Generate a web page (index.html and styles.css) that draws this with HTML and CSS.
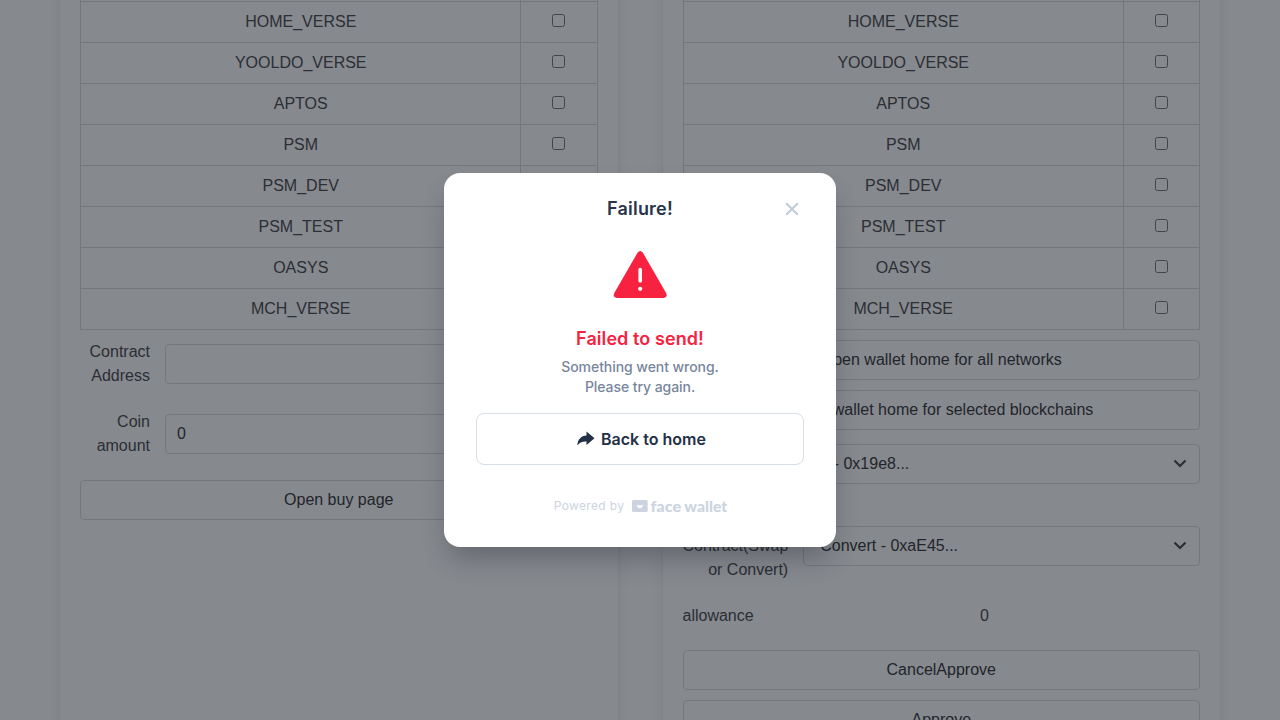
FILE: index.html
```html
<!DOCTYPE html>
<html lang="en">
<head>
<meta charset="utf-8">
<title>Face Wallet</title>
<link rel="stylesheet" href="styles.css">
</head>
<body>
<main class="page">
  <section class="box">
    <table class="networks">
      <tr><td></td><td class="check"></td></tr>
      <tr><td>HOME_VERSE</td><td class="check"><input type="checkbox"></td></tr>
      <tr><td>YOOLDO_VERSE</td><td class="check"><input type="checkbox"></td></tr>
      <tr><td>APTOS</td><td class="check"><input type="checkbox"></td></tr>
      <tr><td>PSM</td><td class="check"><input type="checkbox"></td></tr>
      <tr><td>PSM_DEV</td><td class="check"><input type="checkbox"></td></tr>
      <tr><td>PSM_TEST</td><td class="check"><input type="checkbox"></td></tr>
      <tr><td>OASYS</td><td class="check"><input type="checkbox"></td></tr>
      <tr><td>MCH_VERSE</td><td class="check"><input type="checkbox"></td></tr>
    </table>
    <div class="field"><label class="label">Contract Address</label><div class="control"></div></div>
    <div class="field"><label class="label">Coin amount</label><div class="control">0</div></div>
    <div class="button">Open buy page</div>
  </section>
  <section class="box">
    <table class="networks">
      <tr><td></td><td class="check"></td></tr>
      <tr><td>HOME_VERSE</td><td class="check"><input type="checkbox"></td></tr>
      <tr><td>YOOLDO_VERSE</td><td class="check"><input type="checkbox"></td></tr>
      <tr><td>APTOS</td><td class="check"><input type="checkbox"></td></tr>
      <tr><td>PSM</td><td class="check"><input type="checkbox"></td></tr>
      <tr><td>PSM_DEV</td><td class="check"><input type="checkbox"></td></tr>
      <tr><td>PSM_TEST</td><td class="check"><input type="checkbox"></td></tr>
      <tr><td>OASYS</td><td class="check"><input type="checkbox"></td></tr>
      <tr><td>MCH_VERSE</td><td class="check"><input type="checkbox"></td></tr>
    </table>
    <div class="button">Open wallet home for all networks</div>
    <div class="button">Open wallet home for selected blockchains</div>
    <div class="select-row">
      <span class="select-label"></span>
      <div class="control select first"><span>- 0x19e8...</span><svg class="chevron" viewBox="0 0 14 9"><path d="M1.500 1.500 7 7l5.500-5.500"/></svg></div>
    </div>
    <div class="select-row tall">
      <span class="select-label">Contract(Swap or Convert)</span>
      <div class="control select"><span>Convert - 0xaE45...</span><svg class="chevron" viewBox="0 0 14 9"><path d="M1.500 1.500 7 7l5.500-5.500"/></svg></div>
    </div>
    <div class="allowance"><span>allowance</span><span class="amount">0</span></div>
    <div class="button">CancelApprove</div>
    <div class="button">Approve</div>
  </section>
</main>
<div class="overlay">
  <div class="modal">
    <header class="modal-head">
      <h1 class="title">Failure!</h1>
      <svg class="close" viewBox="0 0 14 14"><path d="M1.200 1.200l11.600 11.600m0-11.600l-11.600 11.600"/></svg>
    </header>
    <svg class="warning" viewBox="0 0 54 48">
      <path class="sign" d="M24.700 2.400Q27.200-.600 29.700 2.400L53.100 43Q55 47.600 50.500 48h-46.600Q-.600 47.600 1.300 43z"/>
      <path class="mark" d="M27.200 19.500v11.500"/><circle class="dot" cx="27.200" cy="38.800" r="2.100"/>
    </svg>
    <h2 class="failed">Failed to send!</h2>
    <p class="message">Something went wrong.<br>Please try again.</p>
    <div class="home"><svg class="arrow" viewBox="0 0 18 16"><path d="M9.500 .500L17.500 7.300l-8 6.800v-3.700C5 10.200 2.500 11.500.300 14.600 .600 8.500 4 4.700 9.500 4.400z"/></svg><span>Back to home</span></div>
    <footer class="powered"><span>Powered by</span>
      <svg class="logo" viewBox="0 0 96 16"><path fill-rule="evenodd" d="M1.500 2h12.700a1.500 1.500 0 0 1 1.500 1.500v9a1.500 1.500 0 0 1-1.500 1.500H1.500a1.500 1.500 0 0 1-1.500-1.500v-9A1.500 1.500 0 0 1 1.500 2zm3.300 4.700C5 11.300 10.700 11.300 11 6.700L9.500 7.300h-3z"/><text x="18.400" y="13.500" textLength="31" lengthAdjust="spacingAndGlyphs">face</text><text x="52.300" y="13.500" textLength="43" lengthAdjust="spacingAndGlyphs">wallet</text></svg>
    </footer>
  </div>
</div>
</body>
</html>
```
FILE: styles.css
```css
* { box-sizing: border-box; }
body { margin: 0; height: 720px; overflow: hidden; background: #fff; color: #4a4a4a; font: 16px/24px "Liberation Sans", Arial, sans-serif; }
.page { display: grid; grid-template-columns: 1fr 1fr; column-gap: 45px; width: 1160px; height: 860px; margin: -60px auto 0; }
.box { padding: 20px; border-radius: 6px; box-shadow: 0 8px 16px -2px rgba(10,10,10,.1), 0 0 0 1px rgba(10,10,10,.02); }
.networks { width: 100%; border-collapse: collapse; table-layout: fixed; text-align: center; }
.networks td { height: 41px; padding: 8px 12px; border: 1px solid #dbdbdb; }
.networks .check { width: 76.500px; }
.networks td:first-child { padding-left: 12.500px; }
.check input { margin: 0; vertical-align: baseline; }
.field { display: flex; align-items: center; gap: 15px; margin-bottom: 22px; }
.networks + .field { margin-top: 10px; }
.label { width: 70px; text-align: right; }
.control { flex: 1; height: 40px; padding: 7px 11px; border: 1px solid #dbdbdb; border-radius: 4px; color: #363636; }
.button { height: 40px; margin-top: 10px; padding-top: 7px; border: 1px solid #dbdbdb; border-radius: 4px; color: #363636; text-align: center; }
.field + .button { margin-top: 0; }
.select-row { display: flex; align-items: center; gap: 15px; height: 48px; margin-top: 10px; }
.select-row.tall { height: 72px; margin-top: 22px; }
.select-label { width: 105.700px; text-align: right; }
.tall .select-label { padding-top: 24px; }
.select { display: flex; align-items: center; justify-content: space-between; padding: 0 12px 0 16px; }
.select.first { padding-left: 29.500px; }
.chevron { width: 14px; height: 9px; margin-top: -1px; fill: none; stroke: #484848; stroke-width: 2.200; }
.allowance { display: flex; gap: 15px; margin: 22px 0; }
.amount { flex: 1; text-align: center; }
.allowance + .button { margin-top: 0; }
.overlay { position: absolute; inset: 0; display: grid; place-items: center; background: rgba(13,19,29,.5); font-family: Inter, sans-serif; }
.modal { display: flex; flex-direction: column; align-items: center; width: 392px; height: 374px; padding: 24px 32px; border-radius: 16px; background: #fff; box-shadow: 0 16px 28px -6px rgba(13,19,29,.3); }
.modal-head { display: grid; grid-template-columns: 24px 1fr 24px; align-items: center; width: 100%; height: 24px; }
.title { grid-column: 2; margin: 0; font-size: 18px; font-weight: 600; line-height: 24px; letter-spacing: .2px; text-align: center; color: #283449; }
.close { width: 14px; height: 14px; margin-left: 5px; fill: none; stroke: #c0ccda; stroke-width: 2.200; }
.warning { width: 54px; height: 48px; margin-top: 29px; }
.sign { fill: #f6223f; }
.mark { stroke: #fff; stroke-width: 3.600; stroke-linecap: round; }
.dot { fill: #fff; }
.failed { margin: 29px 0 0; font-size: 18px; font-weight: 600; line-height: 24px; letter-spacing: .08px; color: #f6223f; }
.message { margin: 6px 0 0; font-size: 14px; font-weight: 500; line-height: 20px; letter-spacing: -.06px; text-align: center; color: #77869c; }
.home { display: flex; align-items: center; justify-content: center; gap: 6px; width: 328px; height: 52px; padding-left: 3px; margin-top: 16px; border: 1px solid #d8dee7; border-radius: 8px; color: #233046; font-size: 16px; font-weight: 600; }
.arrow { width: 18px; height: 16px; fill: currentColor; }
.powered { display: flex; align-items: center; gap: 8px; height: 20px; margin-top: 31px; padding-left: 2px; color: #cbd4df; font-size: 12px; letter-spacing: .35px; }
.logo { width: 96px; height: 16px; fill: #cbd4df; letter-spacing: 0; }
.logo text { font: 900 15px Lato, sans-serif; }
```
